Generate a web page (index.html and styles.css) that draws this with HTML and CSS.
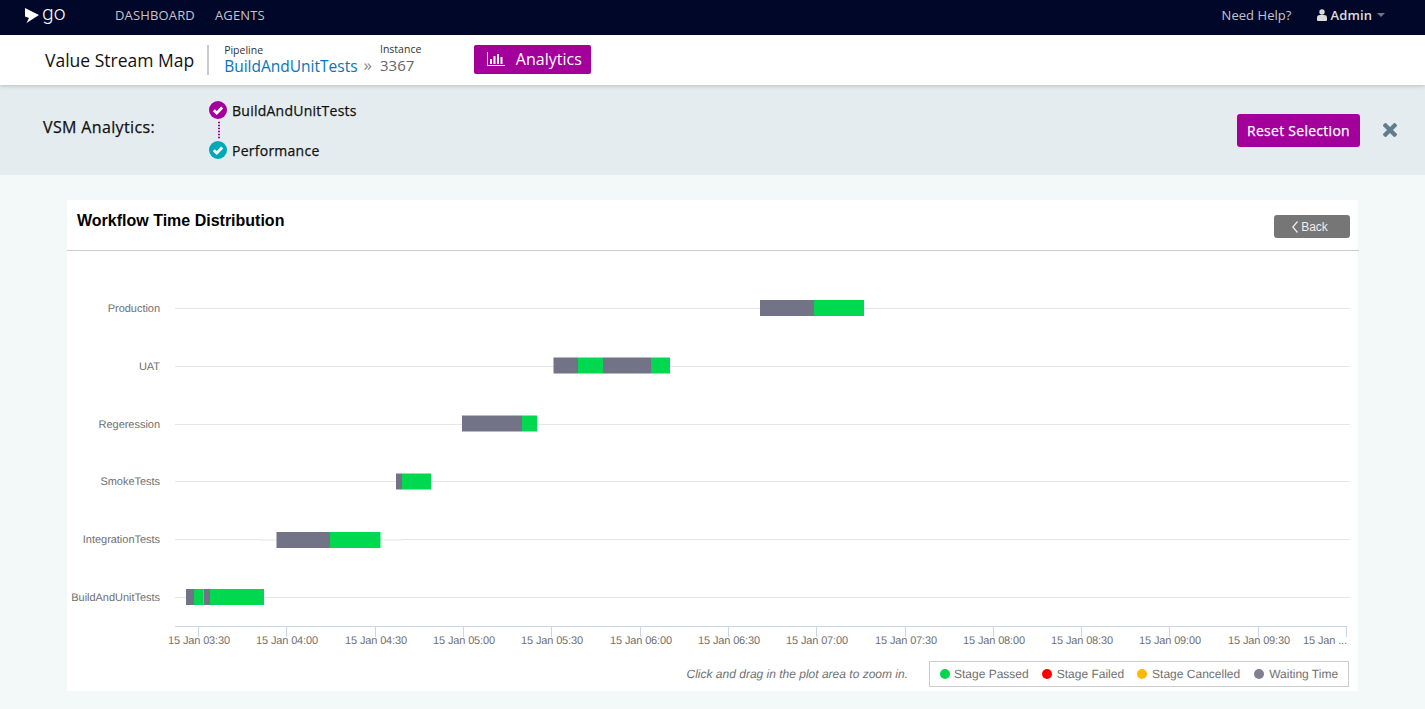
FILE: index.html
```html
<!DOCTYPE html>
<html lang="en">
<head>
<meta charset="utf-8">
<title>Value Stream Map</title>
<link rel="stylesheet" href="styles.css">
</head>
<body>
<header class="topbar">
  <div class="brand">
    <svg class="brand-mark" viewBox="0 0 14 15" width="14" height="15"><path d="M0 0 L14 7 L1.500 15 L4 10 L0 8.500 Z" fill="#fff"/></svg>
    <span class="brand-name">go</span>
  </div>
  <nav class="nav-main"><a>DASHBOARD</a><a>AGENTS</a></nav>
  <div class="nav-right">
    <a class="help">Need Help?</a>
    <span class="user">
      <svg viewBox="0 0 10 12" width="10" height="12"><circle cx="5" cy="3" r="2.7" fill="#ddd"/><path d="M0 11 V8.5 C0 6.8 1.5 6 2.8 6 H7.2 C8.5 6 10 6.8 10 8.5 V11 Q10 12 9 12 H1 Q0 12 0 11 Z" fill="#ddd"/></svg>
      <span class="user-name">Admin</span>
      <i class="caret"></i>
    </span>
  </div>
</header>

<section class="subbar">
  <h1 class="page-title">Value Stream Map</h1>
  <div class="crumb crumb-pipeline">
    <span class="crumb-label">Pipeline</span>
    <a class="crumb-link">BuildAndUnitTests</a>
  </div>
  <span class="crumb-sep">»</span>
  <div class="crumb crumb-instance">
    <span class="crumb-label">Instance</span>
    <span class="crumb-value">3367</span>
  </div>
  <button class="btn-analytics">
    <svg viewBox="0 0 18 14" width="18" height="14"><path d="M0.5 0 V13.5 H18" fill="none" stroke="#fff" stroke-width="1"/><path d="M3 7h2v5H3zM6.5 4h2v8h-2zM10 2h2v10h-2zM13.500 5h2v7h-2z" fill="#fff"/></svg>
    <span>Analytics</span>
  </button>
</section>

<section class="vsm">
  <div class="vsm-title">VSM Analytics:</div>
  <ul class="vsm-list">
    <li class="vsm-item">
      <svg viewBox="0 0 18 18" width="18" height="18"><circle cx="9" cy="9" r="9" fill="#a3009b"/><path d="M4.800 9.200 L7.800 12 L13.200 6.600" fill="none" stroke="#fff" stroke-width="2.800"/></svg>
      <span>BuildAndUnitTests</span>
    </li>
    <li class="vsm-link"></li>
    <li class="vsm-item">
      <svg viewBox="0 0 18 18" width="18" height="18"><circle cx="9" cy="9" r="9" fill="#00a9b5"/><path d="M4.800 9.200 L7.800 12 L13.200 6.600" fill="none" stroke="#fff" stroke-width="2.800"/></svg>
      <span>Performance</span>
    </li>
  </ul>
  <button class="btn-reset">Reset Selection</button>
  <svg class="close" viewBox="0 0 14 14" width="14" height="14"><path d="M2.500 2.500 L11.500 11.500 M11.500 2.500 L2.500 11.500" stroke="#5f7d8c" stroke-width="4.200" stroke-linecap="square" fill="none"/></svg>
</section>

<main class="content">
  <article class="card">
    <div class="card-head">
      <h2 class="card-title">Workflow Time Distribution</h2>
      <button class="btn-back">
        <svg viewBox="0 0 6 12" width="6" height="12"><path d="M5.500 0.500 L0.800 6 L5.500 11.500" fill="none" stroke="#eee" stroke-width="1.200"/></svg>
        <span>Back</span>
      </button>
    </div>
    <svg class="chart" viewBox="67 251 1291 405" width="1291" height="405">
      <g class="grid">
        <path d="M175 308.500H1350M175 366.500H1350M175 424.500H1350M175 481.500H1350M175 539.500H257L262 540H399L404 539.500H1350M175 597.500H1350"/>
      </g>
      <g class="axis">
        <path d="M175 626.500H1347"/>
        <path class="ticks" d="M198.500 627v10M286.500 627v10M375.500 627v10M463.500 627v10M551.500 627v10M640.500 627v10M728.500 627v10M816.500 627v10M905.500 627v10M993.500 627v10M1081.500 627v10M1169.500 627v10M1258.500 627v10M1346.500 627v10"/>
      </g>
      <g class="ylabels">
        <text x="160" y="312">Production</text>
        <text x="160" y="370">UAT</text>
        <text x="160" y="428">Regeression</text>
        <text x="160" y="485">SmokeTests</text>
        <text x="160" y="543">IntegrationTests</text>
        <text x="160" y="601">BuildAndUnitTests</text>
      </g>
      <g class="xlabels">
        <text x="199" y="644">15 Jan 03:30</text>
        <text x="287" y="644">15 Jan 04:00</text>
        <text x="376" y="644">15 Jan 04:30</text>
        <text x="464" y="644">15 Jan 05:00</text>
        <text x="552" y="644">15 Jan 05:30</text>
        <text x="641" y="644">15 Jan 06:00</text>
        <text x="729" y="644">15 Jan 06:30</text>
        <text x="817" y="644">15 Jan 07:00</text>
        <text x="906" y="644">15 Jan 07:30</text>
        <text x="994" y="644">15 Jan 08:00</text>
        <text x="1082" y="644">15 Jan 08:30</text>
        <text x="1170" y="644">15 Jan 09:00</text>
        <text x="1259" y="644">15 Jan 09:30</text>
        <text x="1325" y="644">15 Jan ...</text>
      </g>
      <g class="wait">
        <rect x="760" y="300" width="54" height="16"/>
        <rect x="553.500" y="357.500" width="24.500" height="16"/>
        <rect x="603" y="357.500" width="48" height="16"/>
        <rect x="462" y="415.500" width="60" height="16"/>
        <rect x="396" y="473.500" width="6" height="16"/>
        <rect x="276.500" y="532" width="53.500" height="16"/>
        <rect x="186" y="589" width="8" height="16"/>
        <rect x="203.500" y="589" width="6.500" height="16"/>
      </g>
      <g class="pass">
        <rect x="814" y="300" width="50" height="16"/>
        <rect x="578" y="357.500" width="25" height="16"/>
        <rect x="651" y="357.500" width="19" height="16"/>
        <rect x="522" y="415.500" width="15" height="16"/>
        <rect x="402" y="473.500" width="29" height="16"/>
        <rect x="330" y="532" width="50.500" height="16"/>
        <rect x="194" y="589" width="9.500" height="16"/>
        <rect x="210" y="589" width="54" height="16"/>
      </g>
    </svg>
    <div class="chart-foot">
      <span class="hint">Click and drag in the plot area to zoom in.</span>
      <ul class="legend">
        <li><i class="dot dot-pass"></i>Stage Passed</li>
        <li><i class="dot dot-fail"></i>Stage Failed</li>
        <li><i class="dot dot-cancel"></i>Stage Cancelled</li>
        <li class="legend-last"><i class="dot dot-wait"></i>Waiting Time</li>
      </ul>
    </div>
  </article>
</main>
</body>
</html>
```

FILE: styles.css
```css
* { box-sizing: border-box; }
html, body { margin: 0; padding: 0; }
body {
  width: 1425px;
  height: 709px;
  overflow: hidden;
  background: #f3f9f9;
  font-family: "Open Sans", "Liberation Sans", sans-serif;
  color: #111;
}
ul { list-style: none; margin: 0; padding: 0; }
button { border: 0; font-family: inherit; cursor: pointer; }

/* top bar */
.topbar {
  height: 35px;
  background: #000728;
  display: flex;
  align-items: center;
  padding: 0 40px 6px 25px;
  color: #c4c4cc;
  font-size: 13px;
}
.brand { display: flex; align-items: center; width: 90px; gap: 3px; }
.brand-mark { display: block; margin-top: 1px; }
.brand-name {
  font-family: "Roboto", sans-serif;
  font-weight: 300;
  font-size: 21px;
  line-height: 21px;
  color: #fff;
  margin-top: -3px;
}
.nav-main { display: flex; gap: 20px; letter-spacing: 0.15px; }
.nav-right { margin-left: auto; display: flex; align-items: center; gap: 25px; }
.help { letter-spacing: 0.05px; }
.user { display: flex; align-items: center; gap: 5px; color: #ddd; font-weight: 600; letter-spacing: 0.1px; }
.user svg { display: block; margin-right: -1px; }
.caret {
  display: block;
  margin-top: 1px;
  border-left: 4px solid transparent;
  border-right: 4px solid transparent;
  border-top: 4px solid #6f7488;
}

/* page title bar */
.subbar {
  position: relative;
  z-index: 2;
  height: 50px;
  background: #fff;
  box-shadow: 0 1px 4px rgba(0, 0, 0, 0.2);
  display: flex;
  align-items: center;
  padding-left: 45px;
}
.page-title {
  margin: -1px 15px 0 0;
  padding-right: 13px;
  font-size: 17.5px;
  font-weight: 400;
  line-height: 30px;
  border-right: 2px solid #ccc;
  color: #111;
  white-space: nowrap;
}
.crumb { display: flex; flex-direction: column; }
.crumb-label { font-size: 10.5px; line-height: 12px; color: #333; }
.crumb-link { font-size: 15.5px; line-height: 20px; color: #0a73ba; white-space: nowrap; }
.crumb-value { font-size: 15px; line-height: 20px; color: #666; }
.crumb-sep { font-size: 17px; line-height: 20px; color: #888; margin: 10px 8px 0 6px; }
.crumb-instance { margin-top: -2px; }
.btn-analytics {
  margin: -2px 0 0 53px;
  width: 117px;
  height: 29px;
  background: #a3009b;
  border-radius: 2px;
  color: #fff;
  font-size: 16px;
  display: flex;
  align-items: center;
  justify-content: center;
  gap: 11px;
  padding: 0 0 0 3px;
}

/* analytics panel */
.vsm {
  height: 90px;
  background: #e5ecef;
  display: flex;
  align-items: center;
  padding-left: 43px;
  padding-right: 28px;
}
.vsm-title { width: 166px; margin-top: -6px; font-size: 16px; letter-spacing: 0.36px; -webkit-text-stroke: 0.25px #111; }
.vsm-list { display: flex; flex-direction: column; }
.vsm-item { display: flex; align-items: center; gap: 5px; height: 18px; font-size: 14px; letter-spacing: 0.25px; -webkit-text-stroke: 0.25px #111; }
.vsm-link {
  width: 0;
  height: 22px;
  margin-left: 9px;
  border-left: 2px dotted #a3009b;
  transform: scaleY(0.75);
}
.btn-reset {
  margin-left: auto;
  width: 123px;
  height: 33px;
  background: #a3009b;
  border-radius: 3px;
  color: #fff;
  font-size: 14px;
  letter-spacing: 0.27px;
  -webkit-text-stroke: 0.25px #fff;
  padding: 0;
}
.close { margin-left: 23px; display: block; }

/* chart card */
.content { padding: 25px 67px 18px; }
.card { background: #fff; height: 491px; display: flex; flex-direction: column; }
.card-head {
  height: 51px;
  margin-right: -1px;
  border-bottom: 1px solid #ccc;
  display: flex;
  align-items: flex-start;
  justify-content: space-between;
  padding: 0 9px 0 10px;
}
.card-title {
  margin: 11px 0 0;
  font-family: "Liberation Sans", Arial, sans-serif;
  font-size: 16px;
  line-height: 20px;
  font-weight: 700;
  color: #000;
}
.btn-back {
  margin-top: 15px;
  width: 76px;
  height: 23px;
  background: #767676;
  border-radius: 3px;
  color: #eee;
  font-family: "Liberation Sans", Arial, sans-serif;
  font-size: 12px;
  display: flex;
  align-items: center;
  justify-content: center;
  gap: 3px;
  padding: 0 4px 0 0;
}
.btn-back svg { display: block; }

.chart { display: block; font-family: "Liberation Sans", Arial, sans-serif; text-rendering: geometricPrecision; }
.grid path { fill: none; stroke: #e6e6e6; stroke-width: 1; }
.axis path { fill: none; stroke: #ccd6eb; stroke-width: 1; }
.ylabels text { font-size: 11px; fill: #707070; text-anchor: end; letter-spacing: -0.03px; }
.xlabels text { font-size: 11px; fill: #707070; text-anchor: middle; letter-spacing: -0.14px; }
.wait rect { fill: #727387; }
.pass rect { fill: #00d84f; }

.chart-foot {
  display: flex;
  justify-content: flex-end;
  align-items: flex-start;
  gap: 21px;
  padding: 5px 9px 0 0;
  font-family: "Liberation Sans", Arial, sans-serif;
  font-size: 12px;
  color: #707070;
  text-rendering: geometricPrecision;
}
.hint { font-style: italic; line-height: 26px; }
.legend {
  display: flex;
  align-items: center;
  gap: 13px;
  height: 26px;
  width: 420px;
  padding-left: 10px;
  border: 1px solid #ccc;
}
.legend li { display: flex; align-items: center; gap: 5px; white-space: nowrap; }
.legend li:first-child { gap: 4px; }
.legend .legend-last { margin-left: 1px; }
.dot { display: block; width: 10px; height: 10px; border-radius: 50%; }
.dot-pass { background: #00d54f; }
.dot-fail { background: #ff0000; }
.dot-cancel { background: #ffb900; }
.dot-wait { background: #7f7f8f; }
```
